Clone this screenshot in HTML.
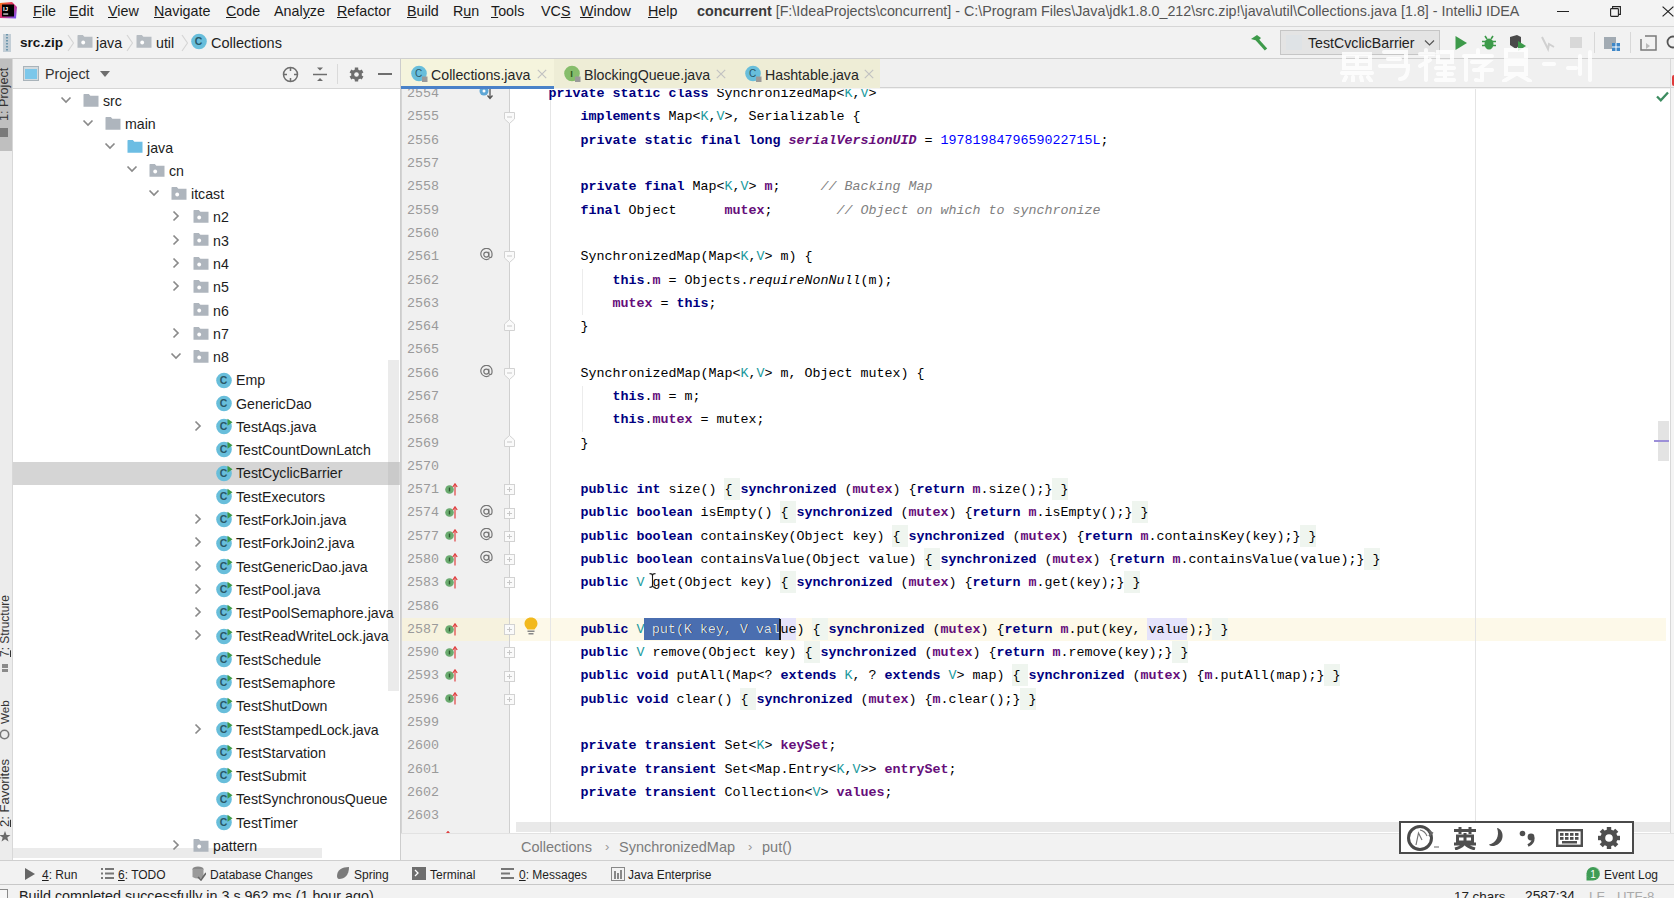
<!DOCTYPE html><html><head><meta charset="utf-8"><style>
*{margin:0;padding:0;box-sizing:border-box}
html,body{width:1674px;height:898px;overflow:hidden;background:#f2f2f2;font-family:"Liberation Sans",sans-serif;color:#1e1e1e}
.abs{position:absolute}
svg{display:block}
.m{position:absolute;top:2px;font-size:14.3px;line-height:18px;color:#1a1a1a;white-space:pre}
.tt{position:absolute;font-size:14.2px;line-height:20px;color:#1c1c1c;white-space:pre}
.tx{position:absolute;top:65.5px;font-size:14.2px;line-height:18px;color:#262626;white-space:pre}
.cl{position:absolute;left:548.5px;height:23.29px;line-height:23.29px;font-family:"Liberation Mono",monospace;font-size:13.333px;white-space:pre;color:#000}
.ln{position:absolute;left:407px;height:23.29px;line-height:23.29px;font-family:"Liberation Mono",monospace;font-size:13.333px;white-space:pre;color:#9a9a9a}
.k{color:#000080;font-weight:bold}
.t{color:#20999d}
.f{color:#660e7a;font-weight:bold}
.sf{color:#660e7a;font-weight:bold;font-style:italic}
.c{color:#808080;font-style:italic}
.n{color:#0000ff}
.i{font-style:italic}
.fo{background:#eff5ef;padding:4px 0 3px 0}
.tw{position:absolute;top:867px;font-size:12px;line-height:16px;color:#1e1e1e;white-space:pre}
.vt{position:absolute;transform:rotate(-90deg);transform-origin:0 0;font-size:12.3px;line-height:12px;color:#333;white-space:pre}
</style></head><body>
<div class="abs" style="left:0px;top:0px;width:1674px;height:26px;background:#f3f3f3;"></div>
<div class="abs" style="left:0px;top:26px;width:1674px;height:1px;background:#d6d6d6;"></div>
<div class="abs" style="left:0px;top:2px;line-height:0"><svg width="17" height="17" viewBox="0 0 17 17"><defs><linearGradient id="ijg" x1="0" y1="0" x2="1" y2="1"><stop offset="0" stop-color="#f97a12"/><stop offset="0.45" stop-color="#e0316c"/><stop offset="1" stop-color="#6b57ff"/></linearGradient></defs><path d="M0 1 L12 0 L17 5 L16 16.5 L0 16 Z" fill="url(#ijg)"/><rect x="2" y="2.5" width="12" height="12" fill="#000"/><text x="3" y="9" font-size="6" font-weight="bold" fill="#fff" font-family="Liberation Sans">IJ</text><rect x="3.2" y="11.5" width="5" height="1.1" fill="#fff"/></svg></div>
<span class="m" style="left:33px"><u>F</u>ile</span>
<span class="m" style="left:69px"><u>E</u>dit</span>
<span class="m" style="left:108px"><u>V</u>iew</span>
<span class="m" style="left:154px"><u>N</u>avigate</span>
<span class="m" style="left:226px"><u>C</u>ode</span>
<span class="m" style="left:274px">Anal<u>y</u>ze</span>
<span class="m" style="left:337px"><u>R</u>efactor</span>
<span class="m" style="left:407px"><u>B</u>uild</span>
<span class="m" style="left:453px">R<u>u</u>n</span>
<span class="m" style="left:491px"><u>T</u>ools</span>
<span class="m" style="left:541px">VC<u>S</u></span>
<span class="m" style="left:580px"><u>W</u>indow</span>
<span class="m" style="left:648px"><u>H</u>elp</span>
<span class="m" style="left:697px;top:1.5px;color:#555"><b style="color:#3a3a3a">concurrent</b> [F:\IdeaProjects\concurrent] - C:\Program Files\Java\jdk1.8.0_212\src.zip!\java\util\Collections.java [1.8] - IntelliJ IDEA</span>
<div class="abs" style="left:1557px;top:11px;width:12px;height:1.3px;background:#222;"></div>
<div class="abs" style="left:1610px;top:5.5px;line-height:0"><svg width="11" height="11" viewBox="0 0 11 11"><rect x="0.6" y="2.6" width="7.8" height="7.8" rx="0.8" fill="none" stroke="#222" stroke-width="1.1"/><path d="M2.6 2.6 V0.6 H10.4 V8.4 H8.4" fill="none" stroke="#222" stroke-width="1.1"/></svg></div>
<div class="abs" style="left:1662px;top:5.5px;line-height:0"><svg width="12" height="11" viewBox="0 0 12 11"><path d="M0.6 0.6 L11.4 10.4 M11.4 0.6 L0.6 10.4" stroke="#222" stroke-width="1.2"/></svg></div>
<div class="abs" style="left:0px;top:27px;width:1674px;height:31px;background:#f2f2f2;"></div>
<div class="abs" style="left:0px;top:58px;width:1674px;height:1px;background:#cfcfcf;"></div>
<div class="abs" style="left:2px;top:34px;line-height:0"><svg width="10" height="18" viewBox="0 0 10 18"><rect x="1" y="0" width="8" height="18" fill="#c3ced6"/><path d="M5 0 V18" stroke="#6f97ad" stroke-width="2" stroke-dasharray="1.5 1.5"/></svg></div>
<span class="abs" style="left:20px;top:33.8px;white-space:pre;font-size:13.6px;line-height:18px;font-weight:bold;color:#161616">src.zip</span>
<div class="abs" style="left:67px;top:34px;line-height:0"><svg width="8" height="18" viewBox="0 0 8 18"><path d="M1 1 L6.5 9 L1 17" fill="none" stroke="#d4d4d4" stroke-width="1.1"/></svg></div>
<div class="abs" style="left:77px;top:35px;line-height:0"><svg class="ico" width="16" height="14" viewBox="0 0 16 14"><path d="M0.5 0.6 Q0.5 0 1.2 0 H5.8 L7.4 1.8 H15.5 V12.8 H0.5 Z" fill="#b6bcc2"/><circle cx="6.2" cy="7.5" r="1.9" fill="#fff"/></svg></div>
<span class="abs" style="left:96px;top:33.8px;white-space:pre;font-size:14.2px;line-height:18px;color:#222">java</span>
<div class="abs" style="left:126px;top:34px;line-height:0"><svg width="8" height="18" viewBox="0 0 8 18"><path d="M1 1 L6.5 9 L1 17" fill="none" stroke="#d4d4d4" stroke-width="1.1"/></svg></div>
<div class="abs" style="left:136px;top:35px;line-height:0"><svg class="ico" width="16" height="14" viewBox="0 0 16 14"><path d="M0.5 0.6 Q0.5 0 1.2 0 H5.8 L7.4 1.8 H15.5 V12.8 H0.5 Z" fill="#b6bcc2"/><circle cx="6.2" cy="7.5" r="1.9" fill="#fff"/></svg></div>
<span class="abs" style="left:156px;top:33.8px;white-space:pre;font-size:14.2px;line-height:18px;color:#222">util</span>
<div class="abs" style="left:181px;top:34px;line-height:0"><svg width="8" height="18" viewBox="0 0 8 18"><path d="M1 1 L6.5 9 L1 17" fill="none" stroke="#d4d4d4" stroke-width="1.1"/></svg></div>
<div class="abs" style="left:191px;top:33px;line-height:0"><svg class="ico" width="17" height="17" viewBox="0 0 17 17"><circle cx="8" cy="8.5" r="7.8" fill="#68bedb"/><text x="7.6" y="12.3" font-family="Liberation Sans" font-weight="bold" font-size="10.5" text-anchor="middle" fill="#2a5868">C</text></svg></div>
<span class="abs" style="left:211px;top:33.5px;white-space:pre;font-size:14.5px;line-height:18px;color:#222">Collections</span>
<div class="abs" style="left:1250px;top:35px;line-height:0"><svg width="18" height="16" viewBox="0 0 18 16"><path d="M1 4 L7 0 L11 3 L8 6 Z" fill="#3d9a4a"/><path d="M7 4.5 L16 14.5" stroke="#3d9a4a" stroke-width="3.2"/></svg></div>
<div class="abs" style="left:1280px;top:30px;width:160px;height:25px;background:#e4e4e4;border:1px solid #c6c6c6"></div>
<div class="abs" style="left:1286px;top:35px;width:16px;height:15px;background:#dfe3e6;"></div>
<span class="abs" style="left:1308px;top:34px;white-space:pre;font-size:14.2px;line-height:18px;color:#222">TestCvclicBarrier</span>
<div class="abs" style="left:1424px;top:39px;line-height:0"><svg width="11" height="8" viewBox="0 0 11 8"><path d="M1 1.5 L5.5 6 L10 1.5" fill="none" stroke="#555" stroke-width="1.2"/></svg></div>
<div class="abs" style="left:1455px;top:36px;line-height:0"><svg width="12" height="14" viewBox="0 0 12 14"><path d="M0.5 0 L12 7 L0.5 14 Z" fill="#3d9a4a"/></svg></div>
<div class="abs" style="left:1482px;top:35px;line-height:0"><svg width="14" height="15" viewBox="0 0 14 15"><ellipse cx="7" cy="9" rx="4.5" ry="5.5" fill="#3d9a4a"/><path d="M0 6.5 H14 M0 10.5 H14 M3 1 L5 4 M11 1 L9 4" stroke="#3d9a4a" stroke-width="1.6"/></svg></div>
<div class="abs" style="left:1510px;top:35px;line-height:0"><svg width="17" height="17" viewBox="0 0 17 17"><path d="M0 2 L7 0 L11 2 V8 L6 14 L0 10 Z" fill="#4a4a4a"/><path d="M8 6 L16 11 L8 16 Z" fill="#3d9a4a"/></svg></div>
<div class="abs" style="left:1540px;top:36px;line-height:0"><svg width="15" height="16" viewBox="0 0 15 16"><path d="M2 1 L8 13 L9 8 L14 11" stroke="#d0d0d0" stroke-width="2" fill="none"/></svg></div>
<div class="abs" style="left:1570px;top:37px;width:12px;height:11px;background:#d8d8d8;"></div>
<div class="abs" style="left:1594px;top:32px;width:1px;height:21px;background:#d8d8d8;"></div>
<div class="abs" style="left:1604px;top:36px;line-height:0"><svg width="16" height="16" viewBox="0 0 16 16"><rect x="0" y="1" width="12" height="12" fill="#a2abb3"/><rect x="8" y="7" width="8" height="8" fill="#3e87c7"/><rect x="11.5" y="7" width="1" height="8" fill="#fff"/><rect x="8" y="10.5" width="8" height="1" fill="#fff"/></svg></div>
<div class="abs" style="left:1630px;top:32px;width:1px;height:21px;background:#d8d8d8;"></div>
<div class="abs" style="left:1640px;top:35px;line-height:0"><svg width="17" height="16" viewBox="0 0 17 16"><path d="M1 4 V15 H16 V1 H5" fill="none" stroke="#7a7a7a" stroke-width="1.5"/><path d="M6 8 L10 11 L6 14Z" fill="#bbb"/></svg></div>
<div class="abs" style="left:1665px;top:35px;line-height:0"><svg width="9" height="16" viewBox="0 0 9 16"><circle cx="8" cy="7" r="5.5" fill="none" stroke="#555" stroke-width="1.8"/></svg></div>
<div class="abs" style="left:0px;top:59px;width:12px;height:802px;background:#ececec;"></div>
<div class="abs" style="left:12px;top:59px;width:1px;height:802px;background:#d8d8d8;"></div>
<div class="abs" style="left:0px;top:59px;width:12px;height:92px;background:#bfbfbf;"></div>
<span class="vt" style="left:-2px;top:121px;font-size:12.6px">1: Project</span>
<div class="abs" style="left:0px;top:128px;width:8px;height:9px;background:#7a7a7a;"></div>
<span class="vt" style="left:-1.5px;top:657px;font-size:12px"><u>7</u>: Structure</span>
<div class="abs" style="left:2px;top:664px;width:6px;height:4px;background:#8a8a8a;"></div>
<div class="abs" style="left:2px;top:669px;width:6px;height:3px;background:#8a8a8a;"></div>
<span class="vt" style="left:-1.5px;top:724px;font-size:11.6px">Web</span>
<div class="abs" style="left:0px;top:729px;line-height:0"><svg width="10" height="11" viewBox="0 0 10 11"><circle cx="4.5" cy="5.5" r="4.2" fill="none" stroke="#777" stroke-width="1.6"/></svg></div>
<span class="vt" style="left:-1.5px;top:827px;font-size:13px"><u>2</u>: Favorites</span>
<div class="abs" style="left:0px;top:831px;line-height:0"><svg width="11" height="11" viewBox="0 0 11 11"><path d="M5 0 L6.5 4 L10.5 4 L7.3 6.6 L8.5 10.5 L5 8.2 L1.5 10.5 L2.7 6.6 L-0.5 4 L3.5 4 Z" fill="#6a6a6a"/></svg></div>
<div class="abs" style="left:13px;top:59px;width:387px;height:29px;background:#f2f2f2;"></div>
<div class="abs" style="left:13px;top:88px;width:387px;height:1px;background:#d6d6d6;"></div>
<div class="abs" style="left:13px;top:89px;width:387px;height:772px;background:#ffffff;"></div>
<div class="abs" style="left:400px;top:59px;width:1px;height:802px;background:#cdcdcd;"></div>
<div class="abs" style="left:23px;top:66px;line-height:0"><svg width="16" height="15" viewBox="0 0 16 15"><rect x="0.5" y="0.5" width="15" height="14" fill="#d3dade" stroke="#a9b3ba"/><rect x="2" y="3" width="12" height="10" fill="#7cc7ea"/></svg></div>
<span class="abs" style="left:45px;top:65px;white-space:pre;font-size:14.3px;line-height:18px;color:#333">Project</span>
<div class="abs" style="left:100px;top:71px;line-height:0"><svg width="10" height="6" viewBox="0 0 10 6"><path d="M0 0 H10 L5 6 Z" fill="#6e6e6e"/></svg></div>
<div class="abs" style="left:282px;top:66px;line-height:0"><svg width="17" height="17" viewBox="0 0 17 17"><circle cx="8.5" cy="8.5" r="7" fill="none" stroke="#6e6e6e" stroke-width="1.5"/><path d="M8.5 1.5 V5 M8.5 12 V15.5 M1.5 8.5 H5 M12 8.5 H15.5" stroke="#6e6e6e" stroke-width="1.5"/></svg></div>
<div class="abs" style="left:313px;top:66px;line-height:0"><svg width="14" height="17" viewBox="0 0 14 17"><path d="M0 8.5 H14" stroke="#6e6e6e" stroke-width="1.5"/><path d="M4 1.5 H10 L7 4.5 Z M4 15 H10 L7 12 Z" fill="#6e6e6e"/></svg></div>
<div class="abs" style="left:337px;top:64px;width:1px;height:20px;background:#dadada;"></div>
<div class="abs" style="left:348px;top:66px;line-height:0"><svg width="17" height="17" viewBox="0 0 17 17"><g fill="#6e6e6e"><circle cx="8.5" cy="8.5" r="5.3"/><rect x="6.8" y="1.5" width="3.4" height="14" transform="rotate(0 8.5 8.5)"/><rect x="6.8" y="1.5" width="3.4" height="14" transform="rotate(60 8.5 8.5)"/><rect x="6.8" y="1.5" width="3.4" height="14" transform="rotate(-60 8.5 8.5)"/></g><circle cx="8.5" cy="8.5" r="2.3" fill="#f2f2f2"/></svg></div>
<div class="abs" style="left:378px;top:73px;width:14px;height:2px;background:#6e6e6e;"></div>
<div class="abs" style="left:13px;top:89px;width:387px;height:772px;overflow:hidden"><div class="abs" style="left:-13px;top:-89px;width:400px;height:900px">
<div class="abs" style="left:388px;top:360px;width:11px;height:331px;background:#ebebeb;"></div>
<div class="abs" style="left:13px;top:848px;width:309px;height:10px;background:#ebebeb;"></div>
<span class="abs" style="left:60px;top:93.50px"><svg class="chev" width="12" height="12" viewBox="0 0 12 12"><path d="M1.5 3.5 L6 8 L10.5 3.5" fill="none" stroke="#8a8a8a" stroke-width="1.7"/></svg></span>
<span class="abs" style="left:83px;top:93.70px;line-height:0"><svg class="ico" width="16" height="14" viewBox="0 0 16 14"><path d="M0.5 0.6 Q0.5 0 1.2 0 H5.8 L7.4 1.8 H15.5 V12.8 H0.5 Z" fill="#aeb5bd"/></svg></span>
<span class="tt" style="left:103px;top:91.00px">src</span>
<span class="abs" style="left:82px;top:116.78px"><svg class="chev" width="12" height="12" viewBox="0 0 12 12"><path d="M1.5 3.5 L6 8 L10.5 3.5" fill="none" stroke="#8a8a8a" stroke-width="1.7"/></svg></span>
<span class="abs" style="left:105px;top:116.98px;line-height:0"><svg class="ico" width="16" height="14" viewBox="0 0 16 14"><path d="M0.5 0.6 Q0.5 0 1.2 0 H5.8 L7.4 1.8 H15.5 V12.8 H0.5 Z" fill="#aeb5bd"/></svg></span>
<span class="tt" style="left:125px;top:114.28px">main</span>
<span class="abs" style="left:104px;top:140.06px"><svg class="chev" width="12" height="12" viewBox="0 0 12 12"><path d="M1.5 3.5 L6 8 L10.5 3.5" fill="none" stroke="#8a8a8a" stroke-width="1.7"/></svg></span>
<span class="abs" style="left:127px;top:140.26px;line-height:0"><svg class="ico" width="16" height="14" viewBox="0 0 16 14"><path d="M0.5 0.6 Q0.5 0 1.2 0 H5.8 L7.4 1.8 H15.5 V12.8 H0.5 Z" fill="#6cbde3"/></svg></span>
<span class="tt" style="left:147px;top:137.56px">java</span>
<span class="abs" style="left:126px;top:163.34px"><svg class="chev" width="12" height="12" viewBox="0 0 12 12"><path d="M1.5 3.5 L6 8 L10.5 3.5" fill="none" stroke="#8a8a8a" stroke-width="1.7"/></svg></span>
<span class="abs" style="left:149px;top:163.54px;line-height:0"><svg class="ico" width="16" height="14" viewBox="0 0 16 14"><path d="M0.5 0.6 Q0.5 0 1.2 0 H5.8 L7.4 1.8 H15.5 V12.8 H0.5 Z" fill="#aeb5bd"/><circle cx="6.2" cy="7.5" r="1.9" fill="#fff"/></svg></span>
<span class="tt" style="left:169px;top:160.84px">cn</span>
<span class="abs" style="left:148px;top:186.62px"><svg class="chev" width="12" height="12" viewBox="0 0 12 12"><path d="M1.5 3.5 L6 8 L10.5 3.5" fill="none" stroke="#8a8a8a" stroke-width="1.7"/></svg></span>
<span class="abs" style="left:171px;top:186.82px;line-height:0"><svg class="ico" width="16" height="14" viewBox="0 0 16 14"><path d="M0.5 0.6 Q0.5 0 1.2 0 H5.8 L7.4 1.8 H15.5 V12.8 H0.5 Z" fill="#aeb5bd"/><circle cx="6.2" cy="7.5" r="1.9" fill="#fff"/></svg></span>
<span class="tt" style="left:191px;top:184.12px">itcast</span>
<span class="abs" style="left:170px;top:210.40px"><svg class="chev" width="12" height="12" viewBox="0 0 12 12"><path d="M3.5 1.5 L8 6 L3.5 10.5" fill="none" stroke="#8a8a8a" stroke-width="1.7"/></svg></span>
<span class="abs" style="left:193px;top:210.10px;line-height:0"><svg class="ico" width="16" height="14" viewBox="0 0 16 14"><path d="M0.5 0.6 Q0.5 0 1.2 0 H5.8 L7.4 1.8 H15.5 V12.8 H0.5 Z" fill="#aeb5bd"/><circle cx="6.2" cy="7.5" r="1.9" fill="#fff"/></svg></span>
<span class="tt" style="left:213px;top:207.40px">n2</span>
<span class="abs" style="left:170px;top:233.68px"><svg class="chev" width="12" height="12" viewBox="0 0 12 12"><path d="M3.5 1.5 L8 6 L3.5 10.5" fill="none" stroke="#8a8a8a" stroke-width="1.7"/></svg></span>
<span class="abs" style="left:193px;top:233.38px;line-height:0"><svg class="ico" width="16" height="14" viewBox="0 0 16 14"><path d="M0.5 0.6 Q0.5 0 1.2 0 H5.8 L7.4 1.8 H15.5 V12.8 H0.5 Z" fill="#aeb5bd"/><circle cx="6.2" cy="7.5" r="1.9" fill="#fff"/></svg></span>
<span class="tt" style="left:213px;top:230.68px">n3</span>
<span class="abs" style="left:170px;top:256.96px"><svg class="chev" width="12" height="12" viewBox="0 0 12 12"><path d="M3.5 1.5 L8 6 L3.5 10.5" fill="none" stroke="#8a8a8a" stroke-width="1.7"/></svg></span>
<span class="abs" style="left:193px;top:256.66px;line-height:0"><svg class="ico" width="16" height="14" viewBox="0 0 16 14"><path d="M0.5 0.6 Q0.5 0 1.2 0 H5.8 L7.4 1.8 H15.5 V12.8 H0.5 Z" fill="#aeb5bd"/><circle cx="6.2" cy="7.5" r="1.9" fill="#fff"/></svg></span>
<span class="tt" style="left:213px;top:253.96px">n4</span>
<span class="abs" style="left:170px;top:280.24px"><svg class="chev" width="12" height="12" viewBox="0 0 12 12"><path d="M3.5 1.5 L8 6 L3.5 10.5" fill="none" stroke="#8a8a8a" stroke-width="1.7"/></svg></span>
<span class="abs" style="left:193px;top:279.94px;line-height:0"><svg class="ico" width="16" height="14" viewBox="0 0 16 14"><path d="M0.5 0.6 Q0.5 0 1.2 0 H5.8 L7.4 1.8 H15.5 V12.8 H0.5 Z" fill="#aeb5bd"/><circle cx="6.2" cy="7.5" r="1.9" fill="#fff"/></svg></span>
<span class="tt" style="left:213px;top:277.24px">n5</span>
<span class="abs" style="left:193px;top:303.22px;line-height:0"><svg class="ico" width="16" height="14" viewBox="0 0 16 14"><path d="M0.5 0.6 Q0.5 0 1.2 0 H5.8 L7.4 1.8 H15.5 V12.8 H0.5 Z" fill="#aeb5bd"/><circle cx="6.2" cy="7.5" r="1.9" fill="#fff"/></svg></span>
<span class="tt" style="left:213px;top:300.52px">n6</span>
<span class="abs" style="left:170px;top:326.80px"><svg class="chev" width="12" height="12" viewBox="0 0 12 12"><path d="M3.5 1.5 L8 6 L3.5 10.5" fill="none" stroke="#8a8a8a" stroke-width="1.7"/></svg></span>
<span class="abs" style="left:193px;top:326.50px;line-height:0"><svg class="ico" width="16" height="14" viewBox="0 0 16 14"><path d="M0.5 0.6 Q0.5 0 1.2 0 H5.8 L7.4 1.8 H15.5 V12.8 H0.5 Z" fill="#aeb5bd"/><circle cx="6.2" cy="7.5" r="1.9" fill="#fff"/></svg></span>
<span class="tt" style="left:213px;top:323.80px">n7</span>
<span class="abs" style="left:170px;top:349.58px"><svg class="chev" width="12" height="12" viewBox="0 0 12 12"><path d="M1.5 3.5 L6 8 L10.5 3.5" fill="none" stroke="#8a8a8a" stroke-width="1.7"/></svg></span>
<span class="abs" style="left:193px;top:349.78px;line-height:0"><svg class="ico" width="16" height="14" viewBox="0 0 16 14"><path d="M0.5 0.6 Q0.5 0 1.2 0 H5.8 L7.4 1.8 H15.5 V12.8 H0.5 Z" fill="#aeb5bd"/><circle cx="6.2" cy="7.5" r="1.9" fill="#fff"/></svg></span>
<span class="tt" style="left:213px;top:347.08px">n8</span>
<span class="abs" style="left:216px;top:371.56px;line-height:0"><svg class="ico" width="17" height="17" viewBox="0 0 17 17"><circle cx="8" cy="8.5" r="7.8" fill="#68bedb"/><text x="7.6" y="12.3" font-family="Liberation Sans" font-weight="bold" font-size="10.5" text-anchor="middle" fill="#2a5868">C</text></svg></span>
<span class="tt" style="left:236px;top:370.36px">Emp</span>
<span class="abs" style="left:216px;top:394.84px;line-height:0"><svg class="ico" width="17" height="17" viewBox="0 0 17 17"><circle cx="8" cy="8.5" r="7.8" fill="#68bedb"/><text x="7.6" y="12.3" font-family="Liberation Sans" font-weight="bold" font-size="10.5" text-anchor="middle" fill="#2a5868">C</text></svg></span>
<span class="tt" style="left:236px;top:393.64px">GenericDao</span>
<span class="abs" style="left:192px;top:419.92px"><svg class="chev" width="12" height="12" viewBox="0 0 12 12"><path d="M3.5 1.5 L8 6 L3.5 10.5" fill="none" stroke="#8a8a8a" stroke-width="1.7"/></svg></span>
<span class="abs" style="left:216px;top:418.12px;line-height:0"><svg class="ico" width="17" height="17" viewBox="0 0 17 17"><circle cx="8" cy="8.5" r="7.8" fill="#68bedb"/><text x="7.6" y="12.3" font-family="Liberation Sans" font-weight="bold" font-size="10.5" text-anchor="middle" fill="#2a5868">C</text><path d="M11.5 0.8 L16.5 4.3 L11.5 7.8 Z" fill="#3d9a4a"/></svg></span>
<span class="tt" style="left:236px;top:416.92px">TestAqs.java</span>
<span class="abs" style="left:216px;top:441.40px;line-height:0"><svg class="ico" width="17" height="17" viewBox="0 0 17 17"><circle cx="8" cy="8.5" r="7.8" fill="#68bedb"/><text x="7.6" y="12.3" font-family="Liberation Sans" font-weight="bold" font-size="10.5" text-anchor="middle" fill="#2a5868">C</text><path d="M11.5 0.8 L16.5 4.3 L11.5 7.8 Z" fill="#3d9a4a"/></svg></span>
<span class="tt" style="left:236px;top:440.20px">TestCountDownLatch</span>
<div class="abs" style="left:13px;top:461.84px;width:387px;height:23.3px;background:#d5d5d5"></div>
<span class="abs" style="left:216px;top:464.68px;line-height:0"><svg class="ico" width="17" height="17" viewBox="0 0 17 17"><circle cx="8" cy="8.5" r="7.8" fill="#68bedb"/><text x="7.6" y="12.3" font-family="Liberation Sans" font-weight="bold" font-size="10.5" text-anchor="middle" fill="#2a5868">C</text><path d="M11.5 0.8 L16.5 4.3 L11.5 7.8 Z" fill="#3d9a4a"/></svg></span>
<span class="tt" style="left:236px;top:463.48px">TestCyclicBarrier</span>
<span class="abs" style="left:216px;top:487.96px;line-height:0"><svg class="ico" width="17" height="17" viewBox="0 0 17 17"><circle cx="8" cy="8.5" r="7.8" fill="#68bedb"/><text x="7.6" y="12.3" font-family="Liberation Sans" font-weight="bold" font-size="10.5" text-anchor="middle" fill="#2a5868">C</text><path d="M11.5 0.8 L16.5 4.3 L11.5 7.8 Z" fill="#3d9a4a"/></svg></span>
<span class="tt" style="left:236px;top:486.76px">TestExecutors</span>
<span class="abs" style="left:192px;top:513.04px"><svg class="chev" width="12" height="12" viewBox="0 0 12 12"><path d="M3.5 1.5 L8 6 L3.5 10.5" fill="none" stroke="#8a8a8a" stroke-width="1.7"/></svg></span>
<span class="abs" style="left:216px;top:511.24px;line-height:0"><svg class="ico" width="17" height="17" viewBox="0 0 17 17"><circle cx="8" cy="8.5" r="7.8" fill="#68bedb"/><text x="7.6" y="12.3" font-family="Liberation Sans" font-weight="bold" font-size="10.5" text-anchor="middle" fill="#2a5868">C</text><path d="M11.5 0.8 L16.5 4.3 L11.5 7.8 Z" fill="#3d9a4a"/></svg></span>
<span class="tt" style="left:236px;top:510.04px">TestForkJoin.java</span>
<span class="abs" style="left:192px;top:536.32px"><svg class="chev" width="12" height="12" viewBox="0 0 12 12"><path d="M3.5 1.5 L8 6 L3.5 10.5" fill="none" stroke="#8a8a8a" stroke-width="1.7"/></svg></span>
<span class="abs" style="left:216px;top:534.52px;line-height:0"><svg class="ico" width="17" height="17" viewBox="0 0 17 17"><circle cx="8" cy="8.5" r="7.8" fill="#68bedb"/><text x="7.6" y="12.3" font-family="Liberation Sans" font-weight="bold" font-size="10.5" text-anchor="middle" fill="#2a5868">C</text><path d="M11.5 0.8 L16.5 4.3 L11.5 7.8 Z" fill="#3d9a4a"/></svg></span>
<span class="tt" style="left:236px;top:533.32px">TestForkJoin2.java</span>
<span class="abs" style="left:192px;top:559.60px"><svg class="chev" width="12" height="12" viewBox="0 0 12 12"><path d="M3.5 1.5 L8 6 L3.5 10.5" fill="none" stroke="#8a8a8a" stroke-width="1.7"/></svg></span>
<span class="abs" style="left:216px;top:557.80px;line-height:0"><svg class="ico" width="17" height="17" viewBox="0 0 17 17"><circle cx="8" cy="8.5" r="7.8" fill="#68bedb"/><text x="7.6" y="12.3" font-family="Liberation Sans" font-weight="bold" font-size="10.5" text-anchor="middle" fill="#2a5868">C</text><path d="M11.5 0.8 L16.5 4.3 L11.5 7.8 Z" fill="#3d9a4a"/></svg></span>
<span class="tt" style="left:236px;top:556.60px">TestGenericDao.java</span>
<span class="abs" style="left:192px;top:582.88px"><svg class="chev" width="12" height="12" viewBox="0 0 12 12"><path d="M3.5 1.5 L8 6 L3.5 10.5" fill="none" stroke="#8a8a8a" stroke-width="1.7"/></svg></span>
<span class="abs" style="left:216px;top:581.08px;line-height:0"><svg class="ico" width="17" height="17" viewBox="0 0 17 17"><circle cx="8" cy="8.5" r="7.8" fill="#68bedb"/><text x="7.6" y="12.3" font-family="Liberation Sans" font-weight="bold" font-size="10.5" text-anchor="middle" fill="#2a5868">C</text><path d="M11.5 0.8 L16.5 4.3 L11.5 7.8 Z" fill="#3d9a4a"/></svg></span>
<span class="tt" style="left:236px;top:579.88px">TestPool.java</span>
<span class="abs" style="left:192px;top:606.16px"><svg class="chev" width="12" height="12" viewBox="0 0 12 12"><path d="M3.5 1.5 L8 6 L3.5 10.5" fill="none" stroke="#8a8a8a" stroke-width="1.7"/></svg></span>
<span class="abs" style="left:216px;top:604.36px;line-height:0"><svg class="ico" width="17" height="17" viewBox="0 0 17 17"><circle cx="8" cy="8.5" r="7.8" fill="#68bedb"/><text x="7.6" y="12.3" font-family="Liberation Sans" font-weight="bold" font-size="10.5" text-anchor="middle" fill="#2a5868">C</text><path d="M11.5 0.8 L16.5 4.3 L11.5 7.8 Z" fill="#3d9a4a"/></svg></span>
<span class="tt" style="left:236px;top:603.16px">TestPoolSemaphore.java</span>
<span class="abs" style="left:192px;top:629.44px"><svg class="chev" width="12" height="12" viewBox="0 0 12 12"><path d="M3.5 1.5 L8 6 L3.5 10.5" fill="none" stroke="#8a8a8a" stroke-width="1.7"/></svg></span>
<span class="abs" style="left:216px;top:627.64px;line-height:0"><svg class="ico" width="17" height="17" viewBox="0 0 17 17"><circle cx="8" cy="8.5" r="7.8" fill="#68bedb"/><text x="7.6" y="12.3" font-family="Liberation Sans" font-weight="bold" font-size="10.5" text-anchor="middle" fill="#2a5868">C</text><path d="M11.5 0.8 L16.5 4.3 L11.5 7.8 Z" fill="#3d9a4a"/></svg></span>
<span class="tt" style="left:236px;top:626.44px">TestReadWriteLock.java</span>
<span class="abs" style="left:216px;top:650.92px;line-height:0"><svg class="ico" width="17" height="17" viewBox="0 0 17 17"><circle cx="8" cy="8.5" r="7.8" fill="#68bedb"/><text x="7.6" y="12.3" font-family="Liberation Sans" font-weight="bold" font-size="10.5" text-anchor="middle" fill="#2a5868">C</text><path d="M11.5 0.8 L16.5 4.3 L11.5 7.8 Z" fill="#3d9a4a"/></svg></span>
<span class="tt" style="left:236px;top:649.72px">TestSchedule</span>
<span class="abs" style="left:216px;top:674.20px;line-height:0"><svg class="ico" width="17" height="17" viewBox="0 0 17 17"><circle cx="8" cy="8.5" r="7.8" fill="#68bedb"/><text x="7.6" y="12.3" font-family="Liberation Sans" font-weight="bold" font-size="10.5" text-anchor="middle" fill="#2a5868">C</text><path d="M11.5 0.8 L16.5 4.3 L11.5 7.8 Z" fill="#3d9a4a"/></svg></span>
<span class="tt" style="left:236px;top:673.00px">TestSemaphore</span>
<span class="abs" style="left:216px;top:697.48px;line-height:0"><svg class="ico" width="17" height="17" viewBox="0 0 17 17"><circle cx="8" cy="8.5" r="7.8" fill="#68bedb"/><text x="7.6" y="12.3" font-family="Liberation Sans" font-weight="bold" font-size="10.5" text-anchor="middle" fill="#2a5868">C</text><path d="M11.5 0.8 L16.5 4.3 L11.5 7.8 Z" fill="#3d9a4a"/></svg></span>
<span class="tt" style="left:236px;top:696.28px">TestShutDown</span>
<span class="abs" style="left:192px;top:722.56px"><svg class="chev" width="12" height="12" viewBox="0 0 12 12"><path d="M3.5 1.5 L8 6 L3.5 10.5" fill="none" stroke="#8a8a8a" stroke-width="1.7"/></svg></span>
<span class="abs" style="left:216px;top:720.76px;line-height:0"><svg class="ico" width="17" height="17" viewBox="0 0 17 17"><circle cx="8" cy="8.5" r="7.8" fill="#68bedb"/><text x="7.6" y="12.3" font-family="Liberation Sans" font-weight="bold" font-size="10.5" text-anchor="middle" fill="#2a5868">C</text><path d="M11.5 0.8 L16.5 4.3 L11.5 7.8 Z" fill="#3d9a4a"/></svg></span>
<span class="tt" style="left:236px;top:719.56px">TestStampedLock.java</span>
<span class="abs" style="left:216px;top:744.04px;line-height:0"><svg class="ico" width="17" height="17" viewBox="0 0 17 17"><circle cx="8" cy="8.5" r="7.8" fill="#68bedb"/><text x="7.6" y="12.3" font-family="Liberation Sans" font-weight="bold" font-size="10.5" text-anchor="middle" fill="#2a5868">C</text><path d="M11.5 0.8 L16.5 4.3 L11.5 7.8 Z" fill="#3d9a4a"/></svg></span>
<span class="tt" style="left:236px;top:742.84px">TestStarvation</span>
<span class="abs" style="left:216px;top:767.32px;line-height:0"><svg class="ico" width="17" height="17" viewBox="0 0 17 17"><circle cx="8" cy="8.5" r="7.8" fill="#68bedb"/><text x="7.6" y="12.3" font-family="Liberation Sans" font-weight="bold" font-size="10.5" text-anchor="middle" fill="#2a5868">C</text><path d="M11.5 0.8 L16.5 4.3 L11.5 7.8 Z" fill="#3d9a4a"/></svg></span>
<span class="tt" style="left:236px;top:766.12px">TestSubmit</span>
<span class="abs" style="left:216px;top:790.60px;line-height:0"><svg class="ico" width="17" height="17" viewBox="0 0 17 17"><circle cx="8" cy="8.5" r="7.8" fill="#68bedb"/><text x="7.6" y="12.3" font-family="Liberation Sans" font-weight="bold" font-size="10.5" text-anchor="middle" fill="#2a5868">C</text><path d="M11.5 0.8 L16.5 4.3 L11.5 7.8 Z" fill="#3d9a4a"/></svg></span>
<span class="tt" style="left:236px;top:789.40px">TestSynchronousQueue</span>
<span class="abs" style="left:216px;top:813.88px;line-height:0"><svg class="ico" width="17" height="17" viewBox="0 0 17 17"><circle cx="8" cy="8.5" r="7.8" fill="#68bedb"/><text x="7.6" y="12.3" font-family="Liberation Sans" font-weight="bold" font-size="10.5" text-anchor="middle" fill="#2a5868">C</text><path d="M11.5 0.8 L16.5 4.3 L11.5 7.8 Z" fill="#3d9a4a"/></svg></span>
<span class="tt" style="left:236px;top:812.68px">TestTimer</span>
<span class="abs" style="left:170px;top:838.96px"><svg class="chev" width="12" height="12" viewBox="0 0 12 12"><path d="M3.5 1.5 L8 6 L3.5 10.5" fill="none" stroke="#8a8a8a" stroke-width="1.7"/></svg></span>
<span class="abs" style="left:193px;top:838.66px;line-height:0"><svg class="ico" width="16" height="14" viewBox="0 0 16 14"><path d="M0.5 0.6 Q0.5 0 1.2 0 H5.8 L7.4 1.8 H15.5 V12.8 H0.5 Z" fill="#aeb5bd"/><circle cx="6.2" cy="7.5" r="1.9" fill="#fff"/></svg></span>
<span class="tt" style="left:213px;top:835.96px">pattern</span>
<div class="abs" style="left:388px;top:462px;width:11px;height:23px;background:#cacaca;"></div>
</div></div>
<div class="abs" style="left:401px;top:59px;width:1273px;height:29px;background:#f0f0f0;"></div>
<div class="abs" style="left:401px;top:87px;width:1273px;height:1px;background:#d2d2d2;"></div>
<div class="abs" style="left:401px;top:59px;width:153px;height:29px;background:#f5f4dd;"></div>
<div class="abs" style="left:411px;top:65px;line-height:0"><svg class="ico" width="17" height="17" viewBox="0 0 17 17"><circle cx="8" cy="8.5" r="7.8" fill="#68bedb"/><text x="7.6" y="12.3" font-family="Liberation Sans" font-weight="normal" font-size="10" text-anchor="middle" fill="#2a5868">C</text><rect x="11" y="11.5" width="5.5" height="5.5" fill="#9a9a9a"/></svg></div>
<span class="tx" style="left:431px">Collections.java</span>
<div class="abs" style="left:537px;top:69px;line-height:0"><svg width="10" height="10" viewBox="0 0 10 10"><path d="M0.8 0.8 L9.2 9.2 M9.2 0.8 L0.8 9.2" stroke="#c2c2c2" stroke-width="1.2"/></svg></div>
<div class="abs" style="left:554px;top:59px;width:181px;height:29px;background:#eeedd6;"></div>
<div class="abs" style="left:564px;top:65px;line-height:0"><svg class="ico" width="17" height="17" viewBox="0 0 17 17"><circle cx="8" cy="8.5" r="7.8" fill="#86bd6b"/><text x="7.6" y="12.3" font-family="Liberation Sans" font-weight="bold" font-size="9.5" text-anchor="middle" fill="#2f5a1e">I</text><rect x="11" y="11.5" width="5.5" height="5.5" fill="#9a9a9a"/></svg></div>
<span class="tx" style="left:584px">BlockingQueue.java</span>
<div class="abs" style="left:716px;top:69px;line-height:0"><svg width="10" height="10" viewBox="0 0 10 10"><path d="M0.8 0.8 L9.2 9.2 M9.2 0.8 L0.8 9.2" stroke="#c2c2c2" stroke-width="1.2"/></svg></div>
<div class="abs" style="left:735px;top:59px;width:145px;height:29px;background:#eeedd6;"></div>
<div class="abs" style="left:745px;top:65px;line-height:0"><svg class="ico" width="17" height="17" viewBox="0 0 17 17"><circle cx="8" cy="8.5" r="7.8" fill="#68bedb"/><text x="7.6" y="12.3" font-family="Liberation Sans" font-weight="normal" font-size="10" text-anchor="middle" fill="#2a5868">C</text><rect x="11" y="11.5" width="5.5" height="5.5" fill="#9a9a9a"/></svg></div>
<span class="tx" style="left:765px">Hashtable.java</span>
<div class="abs" style="left:864px;top:69px;line-height:0"><svg width="10" height="10" viewBox="0 0 10 10"><path d="M0.8 0.8 L9.2 9.2 M9.2 0.8 L0.8 9.2" stroke="#c2c2c2" stroke-width="1.2"/></svg></div>
<div class="abs" style="left:401px;top:85.5px;width:153px;height:3px;background:#4a82c8;"></div>
<div class="abs" style="left:401px;top:89px;width:1273px;height:744px;overflow:hidden;background:#fff"><div class="abs" style="left:-401px;top:-89px;width:1674px;height:900px">
<div class="abs" style="left:401px;top:88px;width:108px;height:760px;background:#f0f0f0;"></div>
<div class="abs" style="left:401px;top:88px;width:1px;height:760px;background:#d4d4d4;"></div>
<div class="abs" style="left:509px;top:88px;width:1px;height:760px;background:#d0d0d0;"></div>
<div class="abs" style="left:402px;top:617.72px;width:107px;height:23.5px;background:#f6f2de;"></div>
<div class="abs" style="left:510px;top:617.72px;width:1156px;height:23.5px;background:#fdf9e9;"></div>
<div class="abs" style="left:1475px;top:88px;width:1px;height:760px;background:#e4e4e4;"></div>
<div class="abs" style="left:550px;top:100px;width:1px;height:735px;background:#e6e6e6;"></div>
<div class="abs" style="left:582px;top:269.16499999999996px;width:1px;height:46px;background:#ececec;"></div>
<div class="abs" style="left:582px;top:385.61499999999995px;width:1px;height:46px;background:#ececec;"></div>
<div class="abs" style="left:644px;top:618.01px;width:136px;height:22px;background:#4a6eb0;"></div>
<div class="abs" style="left:780px;top:618.01px;width:16px;height:22px;background:#e5e3fb;"></div>
<div class="abs" style="left:1147px;top:618.01px;width:40px;height:22px;background:#e5e3fb;"></div>
<div class="abs" style="left:445px;top:482.77px;line-height:0"><svg width="13" height="13" viewBox="0 0 13 13"><circle cx="4.5" cy="6.5" r="4.3" fill="#6aab6f"/><rect x="3.8" y="4.6" width="1.4" height="3.8" fill="#2d5a30"/><path d="M10 1 L10 12.5" stroke="#e04040" stroke-width="1.2"/><path d="M7.8 4 L10 0.8 L12.2 4" fill="none" stroke="#e04040" stroke-width="1.2"/></svg></div>
<div class="abs" style="left:504px;top:484.27px;line-height:0"><svg width="11" height="11" viewBox="0 0 11 11"><rect x="0.5" y="0.5" width="10" height="10" fill="#fafafa" stroke="#d2d2d2"/><path d="M3 5.5 H8 M5.5 3 V8" stroke="#c8c8c8"/></svg></div>
<div class="abs" style="left:445px;top:506.06px;line-height:0"><svg width="13" height="13" viewBox="0 0 13 13"><circle cx="4.5" cy="6.5" r="4.3" fill="#6aab6f"/><rect x="3.8" y="4.6" width="1.4" height="3.8" fill="#2d5a30"/><path d="M10 1 L10 12.5" stroke="#e04040" stroke-width="1.2"/><path d="M7.8 4 L10 0.8 L12.2 4" fill="none" stroke="#e04040" stroke-width="1.2"/></svg></div>
<div class="abs" style="left:504px;top:507.56px;line-height:0"><svg width="11" height="11" viewBox="0 0 11 11"><rect x="0.5" y="0.5" width="10" height="10" fill="#fafafa" stroke="#d2d2d2"/><path d="M3 5.5 H8 M5.5 3 V8" stroke="#c8c8c8"/></svg></div>
<div class="abs" style="left:445px;top:529.36px;line-height:0"><svg width="13" height="13" viewBox="0 0 13 13"><circle cx="4.5" cy="6.5" r="4.3" fill="#6aab6f"/><rect x="3.8" y="4.6" width="1.4" height="3.8" fill="#2d5a30"/><path d="M10 1 L10 12.5" stroke="#e04040" stroke-width="1.2"/><path d="M7.8 4 L10 0.8 L12.2 4" fill="none" stroke="#e04040" stroke-width="1.2"/></svg></div>
<div class="abs" style="left:504px;top:530.86px;line-height:0"><svg width="11" height="11" viewBox="0 0 11 11"><rect x="0.5" y="0.5" width="10" height="10" fill="#fafafa" stroke="#d2d2d2"/><path d="M3 5.5 H8 M5.5 3 V8" stroke="#c8c8c8"/></svg></div>
<div class="abs" style="left:445px;top:552.64px;line-height:0"><svg width="13" height="13" viewBox="0 0 13 13"><circle cx="4.5" cy="6.5" r="4.3" fill="#6aab6f"/><rect x="3.8" y="4.6" width="1.4" height="3.8" fill="#2d5a30"/><path d="M10 1 L10 12.5" stroke="#e04040" stroke-width="1.2"/><path d="M7.8 4 L10 0.8 L12.2 4" fill="none" stroke="#e04040" stroke-width="1.2"/></svg></div>
<div class="abs" style="left:504px;top:554.14px;line-height:0"><svg width="11" height="11" viewBox="0 0 11 11"><rect x="0.5" y="0.5" width="10" height="10" fill="#fafafa" stroke="#d2d2d2"/><path d="M3 5.5 H8 M5.5 3 V8" stroke="#c8c8c8"/></svg></div>
<div class="abs" style="left:445px;top:575.93px;line-height:0"><svg width="13" height="13" viewBox="0 0 13 13"><circle cx="4.5" cy="6.5" r="4.3" fill="#6aab6f"/><rect x="3.8" y="4.6" width="1.4" height="3.8" fill="#2d5a30"/><path d="M10 1 L10 12.5" stroke="#e04040" stroke-width="1.2"/><path d="M7.8 4 L10 0.8 L12.2 4" fill="none" stroke="#e04040" stroke-width="1.2"/></svg></div>
<div class="abs" style="left:504px;top:577.43px;line-height:0"><svg width="11" height="11" viewBox="0 0 11 11"><rect x="0.5" y="0.5" width="10" height="10" fill="#fafafa" stroke="#d2d2d2"/><path d="M3 5.5 H8 M5.5 3 V8" stroke="#c8c8c8"/></svg></div>
<div class="abs" style="left:445px;top:622.51px;line-height:0"><svg width="13" height="13" viewBox="0 0 13 13"><circle cx="4.5" cy="6.5" r="4.3" fill="#6aab6f"/><rect x="3.8" y="4.6" width="1.4" height="3.8" fill="#2d5a30"/><path d="M10 1 L10 12.5" stroke="#e04040" stroke-width="1.2"/><path d="M7.8 4 L10 0.8 L12.2 4" fill="none" stroke="#e04040" stroke-width="1.2"/></svg></div>
<div class="abs" style="left:504px;top:624.01px;line-height:0"><svg width="11" height="11" viewBox="0 0 11 11"><rect x="0.5" y="0.5" width="10" height="10" fill="#fafafa" stroke="#d2d2d2"/><path d="M3 5.5 H8 M5.5 3 V8" stroke="#c8c8c8"/></svg></div>
<div class="abs" style="left:445px;top:645.81px;line-height:0"><svg width="13" height="13" viewBox="0 0 13 13"><circle cx="4.5" cy="6.5" r="4.3" fill="#6aab6f"/><rect x="3.8" y="4.6" width="1.4" height="3.8" fill="#2d5a30"/><path d="M10 1 L10 12.5" stroke="#e04040" stroke-width="1.2"/><path d="M7.8 4 L10 0.8 L12.2 4" fill="none" stroke="#e04040" stroke-width="1.2"/></svg></div>
<div class="abs" style="left:504px;top:647.31px;line-height:0"><svg width="11" height="11" viewBox="0 0 11 11"><rect x="0.5" y="0.5" width="10" height="10" fill="#fafafa" stroke="#d2d2d2"/><path d="M3 5.5 H8 M5.5 3 V8" stroke="#c8c8c8"/></svg></div>
<div class="abs" style="left:445px;top:669.1px;line-height:0"><svg width="13" height="13" viewBox="0 0 13 13"><circle cx="4.5" cy="6.5" r="4.3" fill="#6aab6f"/><rect x="3.8" y="4.6" width="1.4" height="3.8" fill="#2d5a30"/><path d="M10 1 L10 12.5" stroke="#e04040" stroke-width="1.2"/><path d="M7.8 4 L10 0.8 L12.2 4" fill="none" stroke="#e04040" stroke-width="1.2"/></svg></div>
<div class="abs" style="left:504px;top:670.6px;line-height:0"><svg width="11" height="11" viewBox="0 0 11 11"><rect x="0.5" y="0.5" width="10" height="10" fill="#fafafa" stroke="#d2d2d2"/><path d="M3 5.5 H8 M5.5 3 V8" stroke="#c8c8c8"/></svg></div>
<div class="abs" style="left:445px;top:692.38px;line-height:0"><svg width="13" height="13" viewBox="0 0 13 13"><circle cx="4.5" cy="6.5" r="4.3" fill="#6aab6f"/><rect x="3.8" y="4.6" width="1.4" height="3.8" fill="#2d5a30"/><path d="M10 1 L10 12.5" stroke="#e04040" stroke-width="1.2"/><path d="M7.8 4 L10 0.8 L12.2 4" fill="none" stroke="#e04040" stroke-width="1.2"/></svg></div>
<div class="abs" style="left:504px;top:693.88px;line-height:0"><svg width="11" height="11" viewBox="0 0 11 11"><rect x="0.5" y="0.5" width="10" height="10" fill="#fafafa" stroke="#d2d2d2"/><path d="M3 5.5 H8 M5.5 3 V8" stroke="#c8c8c8"/></svg></div>
<div class="abs" style="left:480px;top:248.38px;line-height:0"><svg width="13" height="13" viewBox="0 0 13 13"><path d="M9.5 10.6 A5.6 5.6 0 1 1 12 6.5 V7.6 Q12 9.6 10.3 9.6 Q8.8 9.6 8.8 7.8 V3.8" fill="none" stroke="#757575" stroke-width="1.2"/><circle cx="6.3" cy="6.6" r="2.5" fill="none" stroke="#757575" stroke-width="1.2"/></svg></div>
<div class="abs" style="left:480px;top:364.82px;line-height:0"><svg width="13" height="13" viewBox="0 0 13 13"><path d="M9.5 10.6 A5.6 5.6 0 1 1 12 6.5 V7.6 Q12 9.6 10.3 9.6 Q8.8 9.6 8.8 7.8 V3.8" fill="none" stroke="#757575" stroke-width="1.2"/><circle cx="6.3" cy="6.6" r="2.5" fill="none" stroke="#757575" stroke-width="1.2"/></svg></div>
<div class="abs" style="left:480px;top:504.56px;line-height:0"><svg width="13" height="13" viewBox="0 0 13 13"><path d="M9.5 10.6 A5.6 5.6 0 1 1 12 6.5 V7.6 Q12 9.6 10.3 9.6 Q8.8 9.6 8.8 7.8 V3.8" fill="none" stroke="#757575" stroke-width="1.2"/><circle cx="6.3" cy="6.6" r="2.5" fill="none" stroke="#757575" stroke-width="1.2"/></svg></div>
<div class="abs" style="left:480px;top:527.86px;line-height:0"><svg width="13" height="13" viewBox="0 0 13 13"><path d="M9.5 10.6 A5.6 5.6 0 1 1 12 6.5 V7.6 Q12 9.6 10.3 9.6 Q8.8 9.6 8.8 7.8 V3.8" fill="none" stroke="#757575" stroke-width="1.2"/><circle cx="6.3" cy="6.6" r="2.5" fill="none" stroke="#757575" stroke-width="1.2"/></svg></div>
<div class="abs" style="left:480px;top:551.14px;line-height:0"><svg width="13" height="13" viewBox="0 0 13 13"><path d="M9.5 10.6 A5.6 5.6 0 1 1 12 6.5 V7.6 Q12 9.6 10.3 9.6 Q8.8 9.6 8.8 7.8 V3.8" fill="none" stroke="#757575" stroke-width="1.2"/><circle cx="6.3" cy="6.6" r="2.5" fill="none" stroke="#757575" stroke-width="1.2"/></svg></div>
<div class="abs" style="left:504px;top:111.64px;line-height:0"><svg width="11" height="12" viewBox="0 0 11 12"><path d="M0.5 0.5 H10.5 V7 L5.5 11.5 L0.5 7 Z" fill="#fafafa" stroke="#d2d2d2"/><path d="M3 5 H8" stroke="#c8c8c8"/></svg></div>
<div class="abs" style="left:504px;top:251.38px;line-height:0"><svg width="11" height="12" viewBox="0 0 11 12"><path d="M0.5 0.5 H10.5 V7 L5.5 11.5 L0.5 7 Z" fill="#fafafa" stroke="#d2d2d2"/><path d="M3 5 H8" stroke="#c8c8c8"/></svg></div>
<div class="abs" style="left:504px;top:367.82px;line-height:0"><svg width="11" height="12" viewBox="0 0 11 12"><path d="M0.5 0.5 H10.5 V7 L5.5 11.5 L0.5 7 Z" fill="#fafafa" stroke="#d2d2d2"/><path d="M3 5 H8" stroke="#c8c8c8"/></svg></div>
<div class="abs" style="left:504px;top:318.74px;line-height:0"><svg width="11" height="12" viewBox="0 0 11 12"><path d="M0.5 11.5 H10.5 V5 L5.5 0.5 L0.5 5 Z" fill="#fafafa" stroke="#d2d2d2"/><path d="M3 7 H8" stroke="#c8c8c8"/></svg></div>
<div class="abs" style="left:504px;top:435.19px;line-height:0"><svg width="11" height="12" viewBox="0 0 11 12"><path d="M0.5 11.5 H10.5 V5 L5.5 0.5 L0.5 5 Z" fill="#fafafa" stroke="#d2d2d2"/><path d="M3 7 H8" stroke="#c8c8c8"/></svg></div>
<div class="abs" style="left:478px;top:85.84px;line-height:0"><svg width="16" height="14" viewBox="0 0 16 14"><circle cx="6" cy="5" r="4.5" fill="#5fa7d6"/><circle cx="6" cy="5" r="1.5" fill="#fff"/><path d="M12 3 V12 M9.5 9.5 L12 12.5 L14.5 9.5" fill="none" stroke="#555" stroke-width="1.3"/></svg></div>
<div class="abs" style="left:446px;top:831.125px;line-height:0"><svg width="12" height="10" viewBox="0 0 12 10"><path d="M2 10 V1 M0 3 L2 0.5 L4 3" stroke="#e04040" fill="none" stroke-width="1.2"/><circle cx="8" cy="6" r="3.5" fill="#e05050"/></svg></div>
<div class="abs" style="left:524px;top:616.51px;line-height:0"><svg width="14" height="18" viewBox="0 0 14 18"><path d="M7 0.5 C10.8 0.5 13.5 3.2 13.5 6.8 C13.5 9.5 11.5 10.8 10.5 12.5 H3.5 C2.5 10.8 0.5 9.5 0.5 6.8 C0.5 3.2 3.2 0.5 7 0.5 Z" fill="#f2b91d"/><rect x="3.5" y="13.5" width="7" height="1.5" fill="#888"/><rect x="4.5" y="16" width="5" height="1.5" fill="#888"/></svg></div>
<div class="cl" style="top:82.20px"><span class="k">private static class </span>SynchronizedMap&lt;<span class="t">K</span>,<span class="t">V</span>&gt;</div>
<div class="ln" style="top:82.20px">2554</div>
<div class="cl" style="top:105.49px">    <span class="k">implements </span>Map&lt;<span class="t">K</span>,<span class="t">V</span>&gt;, Serializable {</div>
<div class="ln" style="top:105.49px">2555</div>
<div class="cl" style="top:128.78px">    <span class="k">private static final long </span><span class="sf">serialVersionUID</span> = <span class="n">1978198479659022715L</span>;</div>
<div class="ln" style="top:128.78px">2556</div>
<div class="cl" style="top:152.07px"></div>
<div class="ln" style="top:152.07px">2557</div>
<div class="cl" style="top:175.36px">    <span class="k">private final </span>Map&lt;<span class="t">K</span>,<span class="t">V</span>&gt; <span class="f">m</span>;     <span class="c">// Backing Map</span></div>
<div class="ln" style="top:175.36px">2558</div>
<div class="cl" style="top:198.65px">    <span class="k">final </span>Object      <span class="f">mutex</span>;        <span class="c">// Object on which to synchronize</span></div>
<div class="ln" style="top:198.65px">2559</div>
<div class="cl" style="top:221.94px"></div>
<div class="ln" style="top:221.94px">2560</div>
<div class="cl" style="top:245.23px">    SynchronizedMap(Map&lt;<span class="t">K</span>,<span class="t">V</span>&gt; m) {</div>
<div class="ln" style="top:245.23px">2561</div>
<div class="cl" style="top:268.52px">        <span class="k">this</span>.<span class="f">m</span> = Objects.<span class="i">requireNonNull</span>(m);</div>
<div class="ln" style="top:268.52px">2562</div>
<div class="cl" style="top:291.81px">        <span class="f">mutex</span> = <span class="k">this</span>;</div>
<div class="ln" style="top:291.81px">2563</div>
<div class="cl" style="top:315.10px">    }</div>
<div class="ln" style="top:315.10px">2564</div>
<div class="cl" style="top:338.39px"></div>
<div class="ln" style="top:338.39px">2565</div>
<div class="cl" style="top:361.68px">    SynchronizedMap(Map&lt;<span class="t">K</span>,<span class="t">V</span>&gt; m, Object mutex) {</div>
<div class="ln" style="top:361.68px">2566</div>
<div class="cl" style="top:384.97px">        <span class="k">this</span>.<span class="f">m</span> = m;</div>
<div class="ln" style="top:384.97px">2567</div>
<div class="cl" style="top:408.26px">        <span class="k">this</span>.<span class="f">mutex</span> = mutex;</div>
<div class="ln" style="top:408.26px">2568</div>
<div class="cl" style="top:431.55px">    }</div>
<div class="ln" style="top:431.55px">2569</div>
<div class="cl" style="top:454.84px"></div>
<div class="ln" style="top:454.84px">2570</div>
<div class="cl" style="top:478.13px">    <span class="k">public int </span>size() <span class="fo">{ </span><span class="k">synchronized </span>(<span class="f">mutex</span>) {<span class="k">return </span><span class="f">m</span>.size();}<span class="fo"> }</span></div>
<div class="ln" style="top:478.13px">2571</div>
<div class="cl" style="top:501.42px">    <span class="k">public boolean </span>isEmpty() <span class="fo">{ </span><span class="k">synchronized </span>(<span class="f">mutex</span>) {<span class="k">return </span><span class="f">m</span>.isEmpty();}<span class="fo"> }</span></div>
<div class="ln" style="top:501.42px">2574</div>
<div class="cl" style="top:524.71px">    <span class="k">public boolean </span>containsKey(Object key) <span class="fo">{ </span><span class="k">synchronized </span>(<span class="f">mutex</span>) {<span class="k">return </span><span class="f">m</span>.containsKey(key);}<span class="fo"> }</span></div>
<div class="ln" style="top:524.71px">2577</div>
<div class="cl" style="top:548.00px">    <span class="k">public boolean </span>containsValue(Object value) <span class="fo">{ </span><span class="k">synchronized </span>(<span class="f">mutex</span>) {<span class="k">return </span><span class="f">m</span>.containsValue(value);}<span class="fo"> }</span></div>
<div class="ln" style="top:548.00px">2580</div>
<div class="cl" style="top:571.29px">    <span class="k">public </span><span class="t">V</span> get(Object key) <span class="fo">{ </span><span class="k">synchronized </span>(<span class="f">mutex</span>) {<span class="k">return </span><span class="f">m</span>.get(key);}<span class="fo"> }</span></div>
<div class="ln" style="top:571.29px">2583</div>
<div class="cl" style="top:594.58px"></div>
<div class="ln" style="top:594.58px">2586</div>
<div class="cl" style="top:617.87px">    <span class="k">public </span><span class="t">V</span> put(K key, V value) <span class="fo">{ </span><span class="k">synchronized </span>(<span class="f">mutex</span>) {<span class="k">return </span><span class="f">m</span>.put(key, value);}<span class="fo"> }</span></div>
<div class="ln" style="top:617.87px">2587</div>
<div class="cl" style="top:641.16px">    <span class="k">public </span><span class="t">V</span> remove(Object key) <span class="fo">{ </span><span class="k">synchronized </span>(<span class="f">mutex</span>) {<span class="k">return </span><span class="f">m</span>.remove(key);}<span class="fo"> }</span></div>
<div class="ln" style="top:641.16px">2590</div>
<div class="cl" style="top:664.45px">    <span class="k">public void </span>putAll(Map&lt;? <span class="k">extends </span><span class="t">K</span>, ? <span class="k">extends </span><span class="t">V</span>&gt; map) <span class="fo">{ </span><span class="k">synchronized </span>(<span class="f">mutex</span>) {<span class="f">m</span>.putAll(map);}<span class="fo"> }</span></div>
<div class="ln" style="top:664.45px">2593</div>
<div class="cl" style="top:687.74px">    <span class="k">public void </span>clear() <span class="fo">{ </span><span class="k">synchronized </span>(<span class="f">mutex</span>) {<span class="f">m</span>.clear();}<span class="fo"> }</span></div>
<div class="ln" style="top:687.74px">2596</div>
<div class="cl" style="top:711.03px"></div>
<div class="ln" style="top:711.03px">2599</div>
<div class="cl" style="top:734.32px">    <span class="k">private transient </span>Set&lt;<span class="t">K</span>&gt; <span class="f">keySet</span>;</div>
<div class="ln" style="top:734.32px">2600</div>
<div class="cl" style="top:757.61px">    <span class="k">private transient </span>Set&lt;Map.Entry&lt;<span class="t">K</span>,<span class="t">V</span>&gt;&gt; <span class="f">entrySet</span>;</div>
<div class="ln" style="top:757.61px">2601</div>
<div class="cl" style="top:780.90px">    <span class="k">private transient </span>Collection&lt;<span class="t">V</span>&gt; <span class="f">values</span>;</div>
<div class="ln" style="top:780.90px">2602</div>
<div class="cl" style="top:804.19px"></div>
<div class="ln" style="top:804.19px">2603</div>
<div class="cl" style="top:827.48px">    <span class="k">public </span>Set&lt;<span class="t">K</span>&gt; keySet() {</div>
<div class="ln" style="top:827.48px">2604</div>
<div class="cl" style="left:652px;top:617.87px;color:#dfe7f6">put(K key, V val</div>
<div class="abs" style="left:779px;top:618.51px;width:2px;height:21px;background:#1a1a1a;"></div>
<div class="abs" style="left:649px;top:573px;line-height:0"><svg width="7" height="15" viewBox="0 0 7 15"><path d="M0.5 0.6 Q3.5 0.6 3.5 2.5 V12.5 Q3.5 14.4 0.5 14.4 M6.5 0.6 Q3.5 0.6 3.5 2.5 V12.5 Q3.5 14.4 6.5 14.4" fill="none" stroke="#1a1a1a" stroke-width="1.1"/></svg></div>
<div class="abs" style="left:516px;top:822px;width:1160px;height:9.5px;background:rgba(0,0,0,0.085);"></div>
<div class="abs" style="left:1655.5px;top:91px;line-height:0"><svg width="13" height="11" viewBox="0 0 13 11"><path d="M1 5.5 L4.8 9.3 L12 1.5" fill="none" stroke="#3c8c60" stroke-width="2.3"/></svg></div>
<div class="abs" style="left:1670px;top:88px;width:1px;height:745px;background:#d8d8d8;"></div>
<div class="abs" style="left:1671px;top:88px;width:3px;height:745px;background:#f4f4f4;"></div>
<div class="abs" style="left:1658px;top:421px;width:11px;height:40px;background:#e3e3e3;"></div>
<div class="abs" style="left:1654px;top:440px;width:15px;height:2px;background:#9c8fd8;"></div>
</div></div>
<div class="abs" style="left:1670px;top:59px;width:1px;height:30px;background:#d8d8d8;"></div>
<div class="abs" style="left:1672px;top:75px;width:4px;height:11px;background:#e03a3a;border-radius:3px"></div>
<div class="abs" style="left:401px;top:833px;width:1273px;height:27px;background:#f2f2f2;"></div>
<div class="abs" style="left:401px;top:833px;width:1273px;height:1px;background:#e2e2e2;"></div>
<span class="abs" style="left:521px;top:838px;white-space:pre;font-size:14.5px;line-height:18px;color:#7c7c7c">Collections</span>
<span class="abs" style="left:605px;top:838px;white-space:pre;font-size:13px;line-height:18px;color:#999">›</span>
<span class="abs" style="left:619px;top:838px;white-space:pre;font-size:14.5px;line-height:18px;color:#7c7c7c">SynchronizedMap</span>
<span class="abs" style="left:748px;top:838px;white-space:pre;font-size:13px;line-height:18px;color:#999">›</span>
<span class="abs" style="left:762px;top:838px;white-space:pre;font-size:14.5px;line-height:18px;color:#7c7c7c">put()</span>
<div class="abs" style="left:1399px;top:821px;width:235px;height:33px;background:#ffffff;border:2px solid #4a4a4a"></div>
<div class="abs" style="left:1405px;top:824px;line-height:0"><svg width="38" height="28" viewBox="0 0 38 28"><circle cx="15" cy="14" r="11.5" fill="none" stroke="#4a4a4a" stroke-width="3"/><path d="M11 21 L13.5 9 L17 16 M15 6 Q20 7 22 12" fill="none" stroke="#777" stroke-width="1.2"/><path d="M24 7 L27 9 L24 12" fill="none" stroke="#666" stroke-width="2"/><path d="M29 23 H34" stroke="#999" stroke-width="1.5"/></svg></div>
<div class="abs" style="left:1453px;top:826px;line-height:0"><svg width="24" height="24" viewBox="0 0 24 24"><g stroke="#4e4e4e" stroke-width="3" fill="none"><path d="M1 4.5 H23 M7 1 V8 M17 1 V8 M4.5 10 H19.5 V16 H4.5 Z M12 7 V16 M1 18 H23 M12 16 Q10 21 2 23 M12.5 18 Q15 21 22 23"/></g></svg></div>
<div class="abs" style="left:1488px;top:827px;line-height:0"><svg width="18" height="20" viewBox="0 0 18 20"><path d="M9 1 C16 2 18 16 6 19 C3 19 1.5 18.5 1 17.5 C8 16 12 9 9 1 Z" fill="#4e4e4e"/></svg></div>
<div class="abs" style="left:1519px;top:829px;line-height:0"><svg width="20" height="18" viewBox="0 0 20 18"><circle cx="3.5" cy="4.5" r="2.8" fill="#4e4e4e"/><circle cx="12" cy="8" r="3.4" fill="#4e4e4e"/><path d="M14.2 8.5 Q14.5 14 9 16.5" stroke="#4e4e4e" stroke-width="2.8" fill="none"/></svg></div>
<div class="abs" style="left:1556px;top:829px;line-height:0"><svg width="27" height="18" viewBox="0 0 27 18"><rect x="1.2" y="1.2" width="24.6" height="15.6" fill="none" stroke="#4e4e4e" stroke-width="2.4"/><g fill="#4e4e4e"><rect x="4" y="4" width="3.5" height="2.8"/><rect x="9" y="4" width="3.5" height="2.8"/><rect x="14" y="4" width="3.5" height="2.8"/><rect x="19" y="4" width="3.5" height="2.8"/><rect x="4" y="8" width="3.5" height="2.8"/><rect x="9" y="8" width="3.5" height="2.8"/><rect x="14" y="8" width="3.5" height="2.8"/><rect x="19" y="8" width="3.5" height="2.8"/><rect x="6" y="12" width="15" height="2.5"/></g></svg></div>
<div class="abs" style="left:1597px;top:826px;line-height:0"><svg width="24" height="24" viewBox="0 0 24 24"><g fill="#4e4e4e"><circle cx="12" cy="12" r="8.5"/><rect x="9.8" y="1" width="4.4" height="22"/><rect x="1" y="9.8" width="22" height="4.4"/><rect x="9.8" y="1" width="4.4" height="22" transform="rotate(45 12 12)"/><rect x="9.8" y="1" width="4.4" height="22" transform="rotate(-45 12 12)"/></g><circle cx="12" cy="12" r="3.8" fill="#fff"/></svg></div>
<div class="abs" style="left:0px;top:860px;width:1674px;height:1px;background:#cfcfcf;"></div>
<div class="abs" style="left:0px;top:861px;width:1674px;height:23px;background:#f2f2f2;"></div>
<div class="abs" style="left:0px;top:884px;width:1674px;height:1px;background:#c8c8c8;"></div>
<div class="abs" style="left:25px;top:868px;line-height:0"><svg width="10" height="12" viewBox="0 0 10 12"><path d="M0 0 L10 6 L0 12 Z" fill="#666"/></svg></div>
<span class="tw" style="left:42px"><u>4</u>: Run</span>
<div class="abs" style="left:101px;top:867px;line-height:0"><svg width="13" height="13" viewBox="0 0 13 13"><g fill="#777"><rect x="0" y="1" width="2" height="2"/><rect x="0" y="5.5" width="2" height="2"/><rect x="0" y="10" width="2" height="2"/><rect x="4" y="1" width="9" height="2"/><rect x="4" y="5.5" width="9" height="2"/><rect x="4" y="10" width="9" height="2"/></g></svg></div>
<span class="tw" style="left:118px"><u>6</u>: TODO</span>
<div class="abs" style="left:192px;top:866px;line-height:0"><svg width="14" height="15" viewBox="0 0 14 15"><ellipse cx="6" cy="3" rx="5.5" ry="2.5" fill="#888"/><path d="M0.5 3 V11 Q6 14 11.5 11 V3" fill="#9a9a9a"/><path d="M6 11 L9 14 L14 7" stroke="#666" stroke-width="1.6" fill="none"/></svg></div>
<span class="tw" style="left:210px">Database Changes</span>
<div class="abs" style="left:336px;top:867px;line-height:0"><svg width="14" height="13" viewBox="0 0 14 13"><path d="M13 0 C6 0 1 3 1 9 C1 11 2 12 3 12 C9 12 13 8 13 0 Z" fill="#7a7a7a"/></svg></div>
<span class="tw" style="left:354px">Spring</span>
<div class="abs" style="left:412px;top:867px;line-height:0"><svg width="14" height="13" viewBox="0 0 14 13"><rect x="0" y="0" width="14" height="13" fill="#6e6e6e"/><path d="M3 3 L6 6 L3 9" stroke="#fff" stroke-width="1.3" fill="none"/></svg></div>
<span class="tw" style="left:430px">Terminal</span>
<div class="abs" style="left:501px;top:868px;line-height:0"><svg width="13" height="11" viewBox="0 0 13 11"><g fill="#777"><rect x="0" y="0" width="13" height="2"/><rect x="0" y="4.5" width="9" height="2"/><rect x="0" y="9" width="13" height="2"/></g></svg></div>
<span class="tw" style="left:519px"><u>0</u>: Messages</span>
<div class="abs" style="left:611px;top:867px;line-height:0"><svg width="14" height="14" viewBox="0 0 14 14"><rect x="0.5" y="0.5" width="13" height="13" fill="none" stroke="#888"/><g fill="#888"><rect x="3" y="4" width="2" height="8"/><rect x="6" y="6" width="2" height="6"/><rect x="9" y="3" width="2" height="9"/></g></svg></div>
<span class="tw" style="left:628px">Java Enterprise</span>
<div class="abs" style="left:1586px;top:866px;line-height:0"><svg width="14" height="15" viewBox="0 0 14 15"><path d="M7 0.5 A6.5 6.5 0 1 1 0.5 7 V14.5 H7 A6.5 6.5 0 0 0 7 0.5" fill="#3f9c55"/><circle cx="7" cy="7.5" r="6.5" fill="#3f9c55"/><text x="7" y="11.5" font-size="10" fill="#fff" text-anchor="middle" font-family="Liberation Sans">1</text></svg></div>
<span class="tw" style="left:1604px">Event Log</span>
<div class="abs" style="left:0px;top:885px;width:1674px;height:13px;background:#f2f2f2;"></div>
<div class="abs" style="left:-2px;top:889px;width:10px;height:10px;background:#f7f7f7;border:1px solid #8a8a8a"></div>
<span class="abs" style="left:19px;top:888px;white-space:pre;font-size:14.35px;line-height:16px;color:#222">Build completed successfully in 3 s 962 ms (1 hour ago)</span>
<span class="abs" style="left:1454px;top:888.5px;white-space:pre;font-size:13.4px;line-height:16px;color:#222">17 chars</span>
<span class="abs" style="left:1525px;top:888.5px;white-space:pre;font-size:13.8px;line-height:16px;color:#222">2587:34</span>
<span class="abs" style="left:1589px;top:888.5px;white-space:pre;font-size:13.4px;line-height:16px;color:#aaa">LF</span>
<span class="abs" style="left:1617px;top:888.5px;white-space:pre;font-size:13.2px;line-height:16px;color:#aaa">UTF-8</span>
<div class="abs" style="left:1340px;top:46px;line-height:0"><svg width="270" height="36" viewBox="0 0 270 36" opacity="0.85"><g stroke="#ffffff" stroke-width="4" fill="none" stroke-linecap="round"><path d="M4 8 H30 V22 H4 Z M17 8 V22 M4 15 H30 M2 27 H32 M6 31 L4 35 M13 31 L13 35 M21 31 L22 35 M28 31 L31 35"/><path d="M44 6 H66 V20 M40 20 H68 Q68 33 60 33 M48 13 H60"/><path d="M80 8 H94 M86 4 V34 M80 20 L90 14 M98 6 H112 V16 H98 Z M96 22 H114 M105 16 V34 M98 28 H112 M96 34 H114"/><path d="M124 10 H152 M138 4 V8 M126 10 V34 M132 16 H148 L138 24 M134 24 H152 M142 24 V34 Q142 36 136 34"/><path d="M166 4 H186 V14 H166 Z M166 18 H186 V28 H166 Z M176 28 L164 35 M178 28 L190 35"/><path d="M204 18 H214 M240 10 V28 M250 6 V34 M228 22 H236"/></g></svg></div>
</body></html>
